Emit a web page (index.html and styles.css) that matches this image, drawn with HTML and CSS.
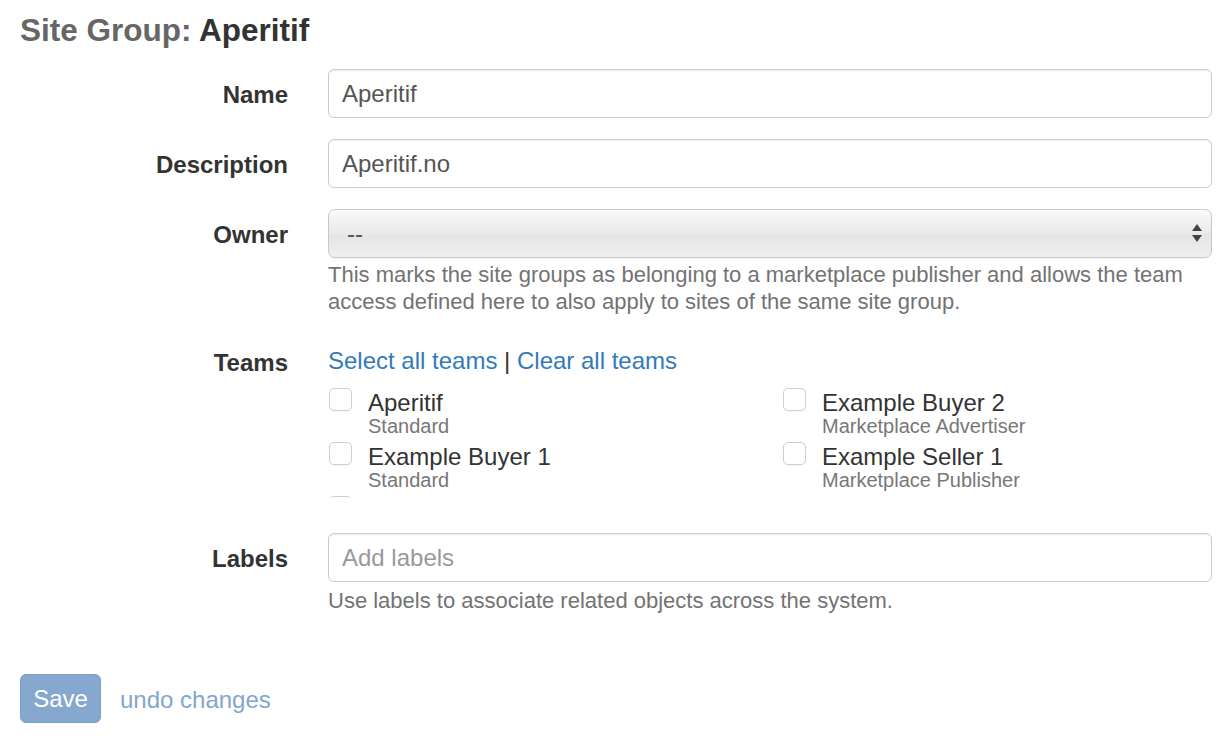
FILE: index.html
```html
<!DOCTYPE html>
<html lang="en">
<head>
<meta charset="utf-8">
<title>Site Group: Aperitif</title>
<link rel="stylesheet" href="styles.css">
</head>
<body>
<div class="page">
  <h1 class="title"><span class="title-kind">Site Group:</span> Aperitif</h1>

  <form class="form">
    <div class="row">
      <label class="label">Name</label>
      <div class="control">
        <input class="input" type="text" value="Aperitif">
      </div>
    </div>

    <div class="row">
      <label class="label">Description</label>
      <div class="control">
        <input class="input" type="text" value="Aperitif.no">
      </div>
    </div>

    <div class="row row-owner">
      <label class="label">Owner</label>
      <div class="control">
        <div class="select-wrap">
          <select class="select"><option>--</option></select>
          <svg class="select-arrows" width="12" height="20" viewBox="0 0 12 20" aria-hidden="true">
            <path d="M6 1 L11 8 L1 8 Z" fill="#444"/>
            <path d="M1 12 L11 12 L6 19 Z" fill="#444"/>
          </svg>
        </div>
        <p class="help help-owner">This marks the site groups as belonging to a marketplace publisher and allows the team access defined here to also apply to sites of the same site group.</p>
      </div>
    </div>

    <div class="row row-teams">
      <label class="label">Teams</label>
      <div class="control">
        <div class="team-links"><a href="#" class="link">Select all teams</a> <span class="sep">|</span> <a href="#" class="link">Clear all teams</a></div>
        <div class="team-list">
          <div class="team">
            <span class="checkbox"></span>
            <div class="team-text"><div class="team-name">Aperitif</div><div class="team-type">Standard</div></div>
          </div>
          <div class="team">
            <span class="checkbox"></span>
            <div class="team-text"><div class="team-name">Example Buyer 2</div><div class="team-type">Marketplace Advertiser</div></div>
          </div>
          <div class="team">
            <span class="checkbox"></span>
            <div class="team-text"><div class="team-name">Example Buyer 1</div><div class="team-type">Standard</div></div>
          </div>
          <div class="team">
            <span class="checkbox"></span>
            <div class="team-text"><div class="team-name">Example Seller 1</div><div class="team-type">Marketplace Publisher</div></div>
          </div>
          <div class="team">
            <span class="checkbox"></span>
          </div>
        </div>
      </div>
    </div>

    <div class="row row-labels">
      <label class="label">Labels</label>
      <div class="control">
        <input class="input" type="text" placeholder="Add labels">
        <p class="help help-labels">Use labels to associate related objects across the system.</p>
      </div>
    </div>

    <div class="actions">
      <button type="button" class="btn-save" disabled>Save</button>
      <a href="#" class="undo">undo changes</a>
    </div>
  </form>
</div>
</body>
</html>
```

FILE: styles.css
```css
* { box-sizing: border-box; }

html, body {
  margin: 0;
  padding: 0;
  background: #fff;
}

body {
  font-family: "Liberation Sans", Arial, Helvetica, sans-serif;
  color: #333;
  font-size: 24px;
}

.page {
  width: 1192px;
  margin-left: 20px;
  padding-top: 13px;
}

.title {
  margin: 0;
  font-size: 31.5px;
  line-height: 34px;
  font-weight: bold;
  color: #333;
}

.title-kind {
  color: #666;
}

.form {
  margin-top: 22px;
}

.row {
  display: grid;
  grid-template-columns: 268px 1fr;
  column-gap: 40px;
  margin-bottom: 21px;
}

.label {
  text-align: right;
  font-weight: bold;
  font-size: 24px;
  line-height: 27px;
  padding-top: 12px;
  color: #333;
}

.control {
  min-width: 0;
}

.input {
  display: block;
  width: 100%;
  height: 49px;
  padding: 0 13px;
  font-family: inherit;
  font-size: 24px;
  color: #555;
  background: #fff;
  border: 1px solid #ccc;
  border-radius: 6px;
  box-shadow: inset 0 1px 1px rgba(0,0,0,0.075);
  outline: none;
}

.input::placeholder {
  color: #999;
}

.select-wrap {
  position: relative;
}

.select {
  display: block;
  width: 100%;
  height: 49px;
  padding: 0 18px;
  font-family: inherit;
  font-size: 24px;
  color: #555;
  border: 1px solid #c8c8c8;
  border-radius: 7px;
  -webkit-appearance: none;
  appearance: none;
  background: linear-gradient(#f9f9f9 0%, #ebebeb 45%, #e5e5e5 55%, #f0f0f0 100%);
  box-shadow: inset 0 1px 0 rgba(255,255,255,0.8), 0 1px 1px rgba(0,0,0,0.05);
  outline: none;
}

.select-arrows {
  position: absolute;
  right: 9px;
  top: 14px;
  pointer-events: none;
}

.row-owner {
  margin-bottom: 22px;
}

.help {
  margin: 0;
  font-size: 22px;
  line-height: 27px;
  color: #737373;
}

.help-owner {
  margin-top: 3px;
}

.help-labels {
  margin-top: 5px;
}

.team-links {
  padding-top: 10px;
  line-height: 27px;
  font-size: 24px;
}

.link {
  color: #337ab7;
  text-decoration: none;
}

.sep {
  color: #333;
}

.row-teams {
  margin-bottom: 35px;
}

.team-list {
  display: grid;
  grid-template-columns: 454px 1fr;
  align-content: start;
  padding-top: 16px;
  height: 124px;
  overflow: hidden;
}

.team {
  display: flex;
  align-items: flex-start;
  margin-bottom: 7px;
}

.checkbox {
  flex: none;
  width: 23px;
  height: 23px;
  margin-left: 1px;
  margin-top: -2px;
  margin-right: 16px;
  border: 1px solid #cfcfcf;
  border-radius: 5px;
  background: #fff;
  box-shadow: 0 1px 1px rgba(0,0,0,0.04);
}

.team-name {
  font-size: 24px;
  line-height: 25px;
  color: #333;
}

.team-type {
  font-size: 20px;
  line-height: 22px;
  color: #777;
}

.row-labels {
  margin-bottom: 0;
}

.actions {
  display: flex;
  align-items: center;
  gap: 19px;
  margin-top: 60px;
}

.btn-save {
  height: 49px;
  width: 81px;
  padding: 0;
  font-family: inherit;
  font-size: 24px;
  color: #fff;
  background: #86a8cf;
  border: 1px solid #7e9fc6;
  border-radius: 6px;
  cursor: not-allowed;
}

.undo {
  font-size: 24px;
  color: #82a6cf;
  text-decoration: none;
  padding-top: 2px;
}
```
